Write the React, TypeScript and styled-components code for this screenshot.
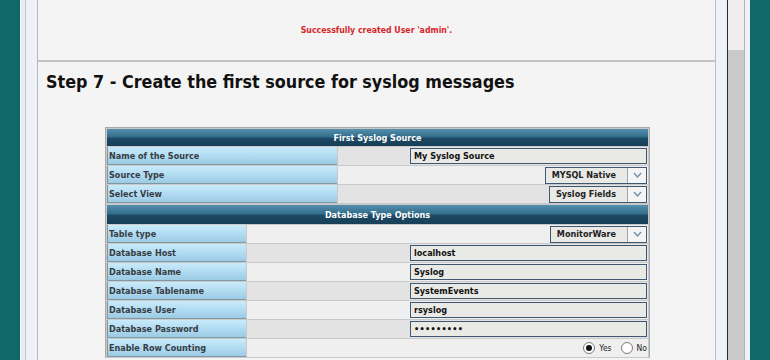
import React from "react";
import styled, { createGlobalStyle } from "styled-components";

const Global = createGlobalStyle`
  html, body { margin: 0; padding: 0; }
  body {
    background: #106868;
    height: 360px;
    overflow: hidden;
    font-family: "DejaVu Sans Condensed", "DejaVu Sans", sans-serif;
    font-stretch: condensed;
  }
`;

const Frame = styled.div`
  margin-left: 20px;
  width: 729px;
  height: 360px;
  display: flex;
  background: #eef1f6;
`;

const LeftGutter = styled.div`
  width: 18px;
  flex: none;
  background: linear-gradient(
    to right,
    #f7f8fa 0 1px,
    #e9edf3 1px 5px,
    #c3c7cc 5px 6px,
    #eef1f6 6px 17px,
    #b9b9b9 17px 18px
  );
`;

const Content = styled.div`
  width: 677px;
  flex: none;
  background: #f4f4f4;
  border-right: 1px solid #bcbcbc;
  display: flex;
  flex-direction: column;
`;

const TopPanel = styled.div`
  height: 60px;
  border-bottom: 2px solid #c3c3c3;
  display: flex;
  align-items: center;
  justify-content: center;
`;

const Notice = styled.div`
  color: #d8262a;
  font-weight: bold;
  font-size: 8.7px;
`;

const StepPanel = styled.div`
  padding: 9px 0 0 8px;
`;

const StepTitle = styled.h1`
  margin: 0;
  font-size: 17.8px;
  line-height: 22px;
  font-weight: bold;
  color: #111;
`;

const Tables = styled.div`
  margin: 34px 0 0 59px;
  width: 545px;
`;

const Table = styled.table`
  width: 545px;
  border-collapse: separate;
  border-spacing: 1px;
  background: #c9c9c9;
  border: 1px solid #a9a9a9;
  border-bottom: none;
  table-layout: fixed;
  font-size: 9px;
  font-weight: bold;
  & + & {
    border-top: none;
  }
`;

const HeadCell = styled.th<{ $h: number }>`
  height: ${(p) => p.$h}px;
  padding: 0;
  color: #fff;
  font-size: 9px;
  font-weight: bold;
  text-align: center;
  background: linear-gradient(
    #5490ad 0%,
    #336e8c 45%,
    #1d4a65 55%,
    #173e57 100%
  );
`;

const LabelCell = styled.td<{ $w: number }>`
  width: ${(p) => p.$w}px;
  height: 18px;
  padding: 0 0 0 1px;
  box-sizing: border-box;
  color: #363c42;
  white-space: nowrap;
  background: linear-gradient(#c9ebfa 0%, #b2dcf2 50%, #9ccbe4 100%);
  border-left: 1px solid #8b9297;
  border-bottom: 1px solid #7f98a6;
`;

const ValueCell = styled.td<{ $alt: boolean }>`
  height: 18px;
  padding: 0 1px 0 0;
  text-align: right;
  background: ${(p) => (p.$alt ? "#efefef" : "#e3e3e3")};
`;

const TextField = styled.div`
  display: inline-block;
  box-sizing: border-box;
  width: 237px;
  height: 16px;
  line-height: 14px;
  border: 1px solid #3d5870;
  background: #e9e9e5;
  color: #111;
  text-align: left;
  padding-left: 3px;
  vertical-align: middle;
`;

const Password = styled(TextField)`
  letter-spacing: 0.3px;
`;

const Select = styled.div`
  display: inline-flex;
  box-sizing: border-box;
  height: 17px;
  border: 1px solid #3d5870;
  background: #e9e9e5;
  vertical-align: middle;
  color: #222;
`;

const SelectText = styled.span`
  padding: 0 11px 0 6px;
  line-height: 15px;
`;

const SelectArrow = styled.span`
  width: 18px;
  border-left: 1px solid #9aa6b0;
  background: #f4f4f4;
  display: flex;
  align-items: center;
  justify-content: center;
`;

const RadioGroup = styled.div`
  display: inline-flex;
  align-items: center;
  gap: 4px;
  vertical-align: middle;
  font-weight: normal;
  font-size: 8.5px;
  color: #222;
`;

const Radio = styled.span<{ $on: boolean }>`
  width: 12px;
  height: 12px;
  box-sizing: border-box;
  border-radius: 50%;
  border: 1px solid #7a7a7a;
  background: #fff;
  display: inline-flex;
  align-items: center;
  justify-content: center;
  margin-left: ${(p) => (p.$on ? 0 : 5)}px;
  &::after {
    content: "";
    display: ${(p) => (p.$on ? "block" : "none")};
    width: 6px;
    height: 6px;
    border-radius: 50%;
    background: #111;
  }
`;

const Chevron = () => (
  <svg width="9" height="6" viewBox="0 0 9 6">
    <polyline points="1,1 4.5,5 8,1" fill="none" stroke="#6f8aa2" strokeWidth="1.3" />
  </svg>
);

const SelectBox = ({ value }: { value: string }) => (
  <Select>
    <SelectText>{value}</SelectText>
    <SelectArrow>
      <Chevron />
    </SelectArrow>
  </Select>
);

type Row = { label: string; value: React.ReactNode };

const section1: Row[] = [
  { label: "Name of the Source", value: <TextField>My Syslog Source</TextField> },
  { label: "Source Type", value: <SelectBox value="MYSQL Native" /> },
  { label: "Select View", value: <SelectBox value="Syslog Fields" /> },
];

const section2: Row[] = [
  { label: "Table type", value: <SelectBox value="MonitorWare" /> },
  { label: "Database Host", value: <TextField>localhost</TextField> },
  { label: "Database Name", value: <TextField>Syslog</TextField> },
  { label: "Database Tablename", value: <TextField>SystemEvents</TextField> },
  { label: "Database User", value: <TextField>rsyslog</TextField> },
  { label: "Database Password", value: <Password>•••••••••</Password> },
  {
    label: "Enable Row Counting",
    value: (
      <RadioGroup>
        <Radio $on />
        <span>Yes</span>
        <Radio $on={false} />
        <span>No</span>
      </RadioGroup>
    ),
  },
];

const Section = ({
  title,
  rows,
  labelWidth,
  headHeight,
  startAlt,
}: {
  title: string;
  rows: Row[];
  labelWidth: number;
  headHeight: number;
  startAlt: boolean;
}) => (
  <Table>
    <colgroup>
      <col style={{ width: labelWidth }} />
      <col />
    </colgroup>
    <tbody>
      <tr>
        <HeadCell colSpan={2} $h={headHeight}>
          {title}
        </HeadCell>
      </tr>
      {rows.map((r, i) => (
        <tr key={r.label}>
          <LabelCell $w={labelWidth}>{r.label}</LabelCell>
          <ValueCell $alt={(i % 2 === 1) !== startAlt}>{r.value}</ValueCell>
        </tr>
      ))}
    </tbody>
  </Table>
);

const RightGutter = styled.div`
  width: 11px;
  flex: none;
  background: #edf1f8;
`;

const Scrollbar = styled.div`
  width: 16px;
  flex: none;
  border-left: 1px solid #2a2a2a;
  border-right: 1px solid #b3b3b3;
  background: #efeded;
  display: flex;
  flex-direction: column;
`;

const Thumb = styled.div`
  margin-top: 50px;
  flex: 1;
  background: #c9c9c9;
`;

const Edge = styled.div`
  width: 5px;
  flex: none;
  background: #eef1f6;
`;

export default function App() {
  return (
    <>
      <Global />
      <Frame>
        <LeftGutter />
        <Content>
          <TopPanel>
            <Notice>Successfully created User 'admin'.</Notice>
          </TopPanel>
          <StepPanel>
            <StepTitle>Step 7 - Create the first source for syslog messages</StepTitle>
            <Tables>
              <Section title="First Syslog Source" rows={section1} labelWidth={230} headHeight={17} startAlt={false} />
              <Section title="Database Type Options" rows={section2} labelWidth={139} headHeight={19} startAlt={true} />
            </Tables>
          </StepPanel>
        </Content>
        <RightGutter />
        <Scrollbar>
          <Thumb />
        </Scrollbar>
        <Edge />
      </Frame>
    </>
  );
}
